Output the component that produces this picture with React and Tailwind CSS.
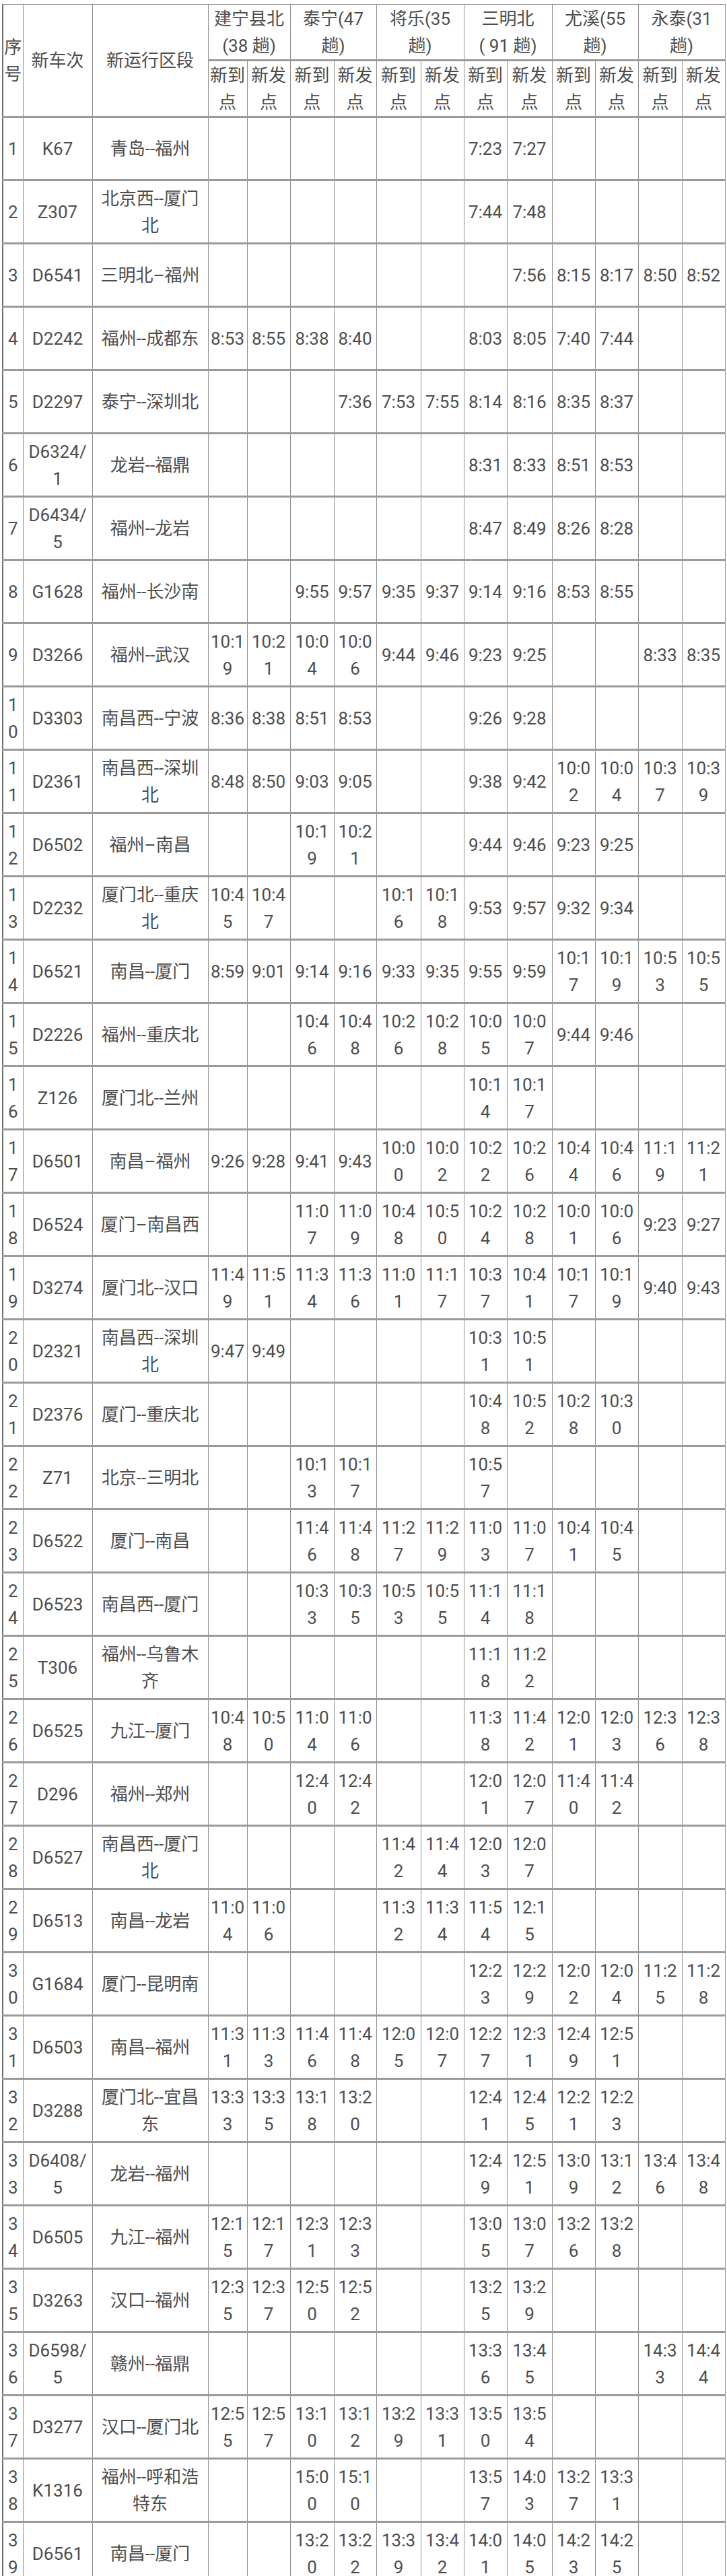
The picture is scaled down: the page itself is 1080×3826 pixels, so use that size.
import React from 'react'

const stations = [
  ['建宁县北', '(38 趟)'],
  ['泰宁(47', '趟)'],
  ['将乐(35', '趟)'],
  ['三明北', '( 91 趟)'],
  ['尤溪(55', '趟)'],
  ['永泰(31', '趟)'],
]

const colWidths = [30, 103, 172, 58, 64, 65, 63, 66, 64, 64, 67, 64, 64, 65, 64]

// train ^ route ^ 12 times (到/发 per station), '-' = empty, '^' in names = line break
const rows = [
  ['K67', '青岛--福州', '- - - - - - 7:23 7:27 - - - -'],
  ['Z307', '北京西--厦门^北', '- - - - - - 7:44 7:48 - - - -'],
  ['D6541', '三明北–福州', '- - - - - - - 7:56 8:15 8:17 8:50 8:52'],
  ['D2242', '福州--成都东', '8:53 8:55 8:38 8:40 - - 8:03 8:05 7:40 7:44 - -'],
  ['D2297', '泰宁--深圳北', '- - - 7:36 7:53 7:55 8:14 8:16 8:35 8:37 - -'],
  ['D6324/^1', '龙岩--福鼎', '- - - - - - 8:31 8:33 8:51 8:53 - -'],
  ['D6434/^5', '福州--龙岩', '- - - - - - 8:47 8:49 8:26 8:28 - -'],
  ['G1628', '福州--长沙南', '- - 9:55 9:57 9:35 9:37 9:14 9:16 8:53 8:55 - -'],
  ['D3266', '福州--武汉', '10:19 10:21 10:04 10:06 9:44 9:46 9:23 9:25 - - 8:33 8:35'],
  ['D3303', '南昌西--宁波', '8:36 8:38 8:51 8:53 - - 9:26 9:28 - - - -'],
  ['D2361', '南昌西--深圳^北', '8:48 8:50 9:03 9:05 - - 9:38 9:42 10:02 10:04 10:37 10:39'],
  ['D6502', '福州–南昌', '- - 10:19 10:21 - - 9:44 9:46 9:23 9:25 - -'],
  ['D2232', '厦门北--重庆^北', '10:45 10:47 - - 10:16 10:18 9:53 9:57 9:32 9:34 - -'],
  ['D6521', '南昌--厦门', '8:59 9:01 9:14 9:16 9:33 9:35 9:55 9:59 10:17 10:19 10:53 10:55'],
  ['D2226', '福州--重庆北', '- - 10:46 10:48 10:26 10:28 10:05 10:07 9:44 9:46 - -'],
  ['Z126', '厦门北--兰州', '- - - - - - 10:14 10:17 - - - -'],
  ['D6501', '南昌–福州', '9:26 9:28 9:41 9:43 10:00 10:02 10:22 10:26 10:44 10:46 11:19 11:21'],
  ['D6524', '厦门–南昌西', '- - 11:07 11:09 10:48 10:50 10:24 10:28 10:01 10:06 9:23 9:27'],
  ['D3274', '厦门北--汉口', '11:49 11:51 11:34 11:36 11:01 11:17 10:37 10:41 10:17 10:19 9:40 9:43'],
  ['D2321', '南昌西--深圳^北', '9:47 9:49 - - - - 10:31 10:51 - - - -'],
  ['D2376', '厦门--重庆北', '- - - - - - 10:48 10:52 10:28 10:30 - -'],
  ['Z71', '北京--三明北', '- - 10:13 10:17 - - 10:57 - - - - -'],
  ['D6522', '厦门--南昌', '- - 11:46 11:48 11:27 11:29 11:03 11:07 10:41 10:45 - -'],
  ['D6523', '南昌西--厦门', '- - 10:33 10:35 10:53 10:55 11:14 11:18 - - - -'],
  ['T306', '福州--乌鲁木^齐', '- - - - - - 11:18 11:22 - - - -'],
  ['D6525', '九江--厦门', '10:48 10:50 11:04 11:06 - - 11:38 11:42 12:01 12:03 12:36 12:38'],
  ['D296', '福州--郑州', '- - 12:40 12:42 - - 12:01 12:07 11:40 11:42 - -'],
  ['D6527', '南昌西--厦门^北', '- - - - 11:42 11:44 12:03 12:07 - - - -'],
  ['D6513', '南昌--龙岩', '11:04 11:06 - - 11:32 11:34 11:54 12:15 - - - -'],
  ['G1684', '厦门--昆明南', '- - - - - - 12:23 12:29 12:02 12:04 11:25 11:28'],
  ['D6503', '南昌--福州', '11:31 11:33 11:46 11:48 12:05 12:07 12:27 12:31 12:49 12:51 - -'],
  ['D3288', '厦门北--宜昌^东', '13:33 13:35 13:18 13:20 - - 12:41 12:45 12:21 12:23 - -'],
  ['D6408/^5', '龙岩--福州', '- - - - - - 12:49 12:51 13:09 13:12 13:46 13:48'],
  ['D6505', '九江--福州', '12:15 12:17 12:31 12:33 - - 13:05 13:07 13:26 13:28 - -'],
  ['D3263', '汉口--福州', '12:35 12:37 12:50 12:52 - - 13:25 13:29 - - - -'],
  ['D6598/^5', '赣州--福鼎', '- - - - - - 13:36 13:45 - - 14:33 14:44'],
  ['D3277', '汉口--厦门北', '12:55 12:57 13:10 13:12 13:29 13:31 13:50 13:54 - - - -'],
  ['K1316', '福州--呼和浩^特东', '- - 15:00 15:10 - - 13:57 14:03 13:27 13:31 - -'],
  ['D6561', '南昌--厦门', '- - 13:20 13:22 13:39 13:42 14:01 14:05 14:23 14:25 - -'],
]

const Lines = ({ parts }) => (
  <>
    {parts.map((p, i) => (
      <span key={i} className="block whitespace-nowrap">{p}</span>
    ))}
  </>
)

// long times wrap after the 4th char, like the narrow cells do
const splitTime = (t) => (t === '-' ? [] : t.length > 4 ? [t.slice(0, 4), t.slice(4)] : [t])

const cell = 'border-r border-[#8f8f8f] text-center align-middle p-0'

export default function App() {
  return (
    <div className="bg-white pt-[6px] pl-[3px] text-[26px] leading-[40px] text-[#4d4d4d]" style={{ fontFamily: 'Roboto, "Noto Sans CJK SC", sans-serif' }}>
      <table className="table-fixed border-collapse w-[1073px] border-t border-[#8f8f8f]">
        <colgroup>
          {colWidths.map((w, i) => (
            <col key={i} style={{ width: w }} />
          ))}
        </colgroup>
        <thead>
          <tr className="h-[83px] border-b-[3px] border-[#9a9a9a]">
            <th rowSpan={2} className={`${cell} font-normal border-l-2 border-l-[#6f6f6f]`}>
              <Lines parts={['序', '号']} />
            </th>
            <th rowSpan={2} className={`${cell} font-normal`}>新车次</th>
            <th rowSpan={2} className={`${cell} font-normal`}>新运行区段</th>
            {stations.map((s, i) => (
              <th key={i} colSpan={2} className={`${cell} font-normal`}>
                <Lines parts={s} />
              </th>
            ))}
          </tr>
          <tr className="h-[84px] border-b-[3px] border-[#9a9a9a]">
            {stations.map((s, i) => (
              <React.Fragment key={i}>
                <th className={`${cell} font-normal`}><Lines parts={['新到', '点']} /></th>
                <th className={`${cell} font-normal`}><Lines parts={['新发', '点']} /></th>
              </React.Fragment>
            ))}
          </tr>
        </thead>
        <tbody>
          {rows.map(([train, route, times], r) => {
            const no = String(r + 1)
            return (
              <tr key={r} className="h-[94px] border-b-[3px] border-[#9a9a9a]">
                <td className={`${cell} border-l-2 border-l-[#6f6f6f]`}>
                  <Lines parts={no.split('')} />
                </td>
                <td className={cell}><Lines parts={train.split('^')} /></td>
                <td className={cell}><Lines parts={route.split('^')} /></td>
                {times.split(' ').map((t, i) => (
                  <td key={i} className={cell}><Lines parts={splitTime(t)} /></td>
                ))}
              </tr>
            )
          })}
        </tbody>
      </table>
    </div>
  )
}
